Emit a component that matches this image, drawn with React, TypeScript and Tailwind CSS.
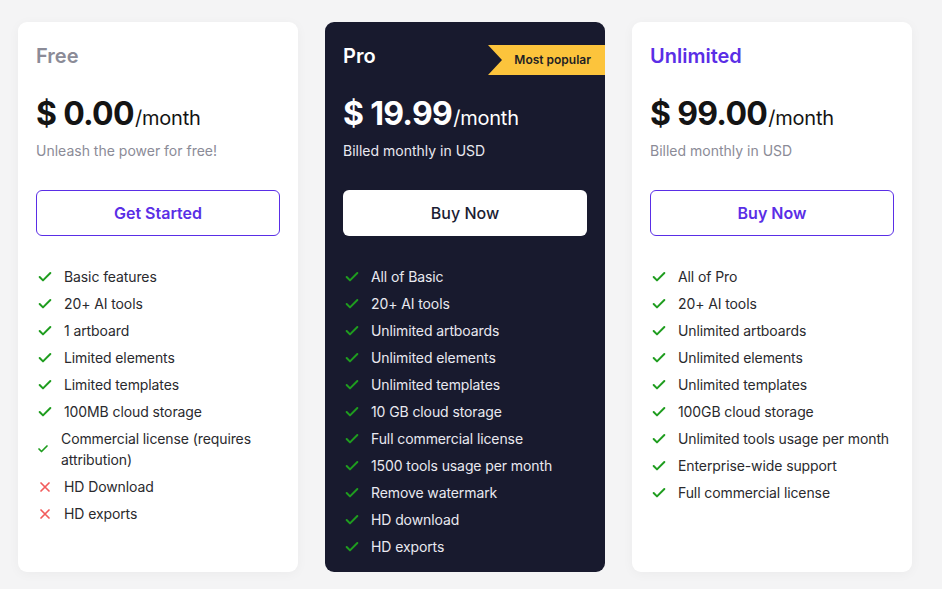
import React from "react";

type Feature = { text: string; ok: boolean };

const Check = () => (
  <svg width="16" height="16" viewBox="0 0 24 24" fill="none" stroke="#1f9d1f" strokeWidth="3" strokeLinecap="round" strokeLinejoin="round" className="shrink-0">
    <path d="M20 6 9 17l-5-5" />
  </svg>
);

const Cross = () => (
  <svg width="16" height="16" viewBox="0 0 24 24" fill="none" stroke="#f25c5c" strokeWidth="2.6" strokeLinecap="round" className="shrink-0">
    <path d="M18 6 6 18M6 6l12 12" />
  </svg>
);

const free: Feature[] = [
  { text: "Basic features", ok: true },
  { text: "20+ AI tools", ok: true },
  { text: "1 artboard", ok: true },
  { text: "Limited elements", ok: true },
  { text: "Limited templates", ok: true },
  { text: "100MB cloud storage", ok: true },
  { text: "Commercial license (requires attribution)", ok: true },
  { text: "HD Download", ok: false },
  { text: "HD exports", ok: false },
];

const pro: Feature[] = [
  "All of Basic",
  "20+ AI tools",
  "Unlimited artboards",
  "Unlimited elements",
  "Unlimited templates",
  "10 GB cloud storage",
  "Full commercial license",
  "1500 tools usage per month",
  "Remove watermark",
  "HD download",
  "HD exports",
].map((t) => ({ text: t, ok: true }));

const unlimited: Feature[] = [
  "All of Pro",
  "20+ AI tools",
  "Unlimited artboards",
  "Unlimited elements",
  "Unlimited templates",
  "100GB cloud storage",
  "Unlimited tools usage per month",
  "Enterprise-wide support",
  "Full commercial license",
].map((t) => ({ text: t, ok: true }));

function FeatureList({ items, dark }: { items: Feature[]; dark?: boolean }) {
  return (
    <ul className={`mt-[27px] flex flex-col text-[14px] tracking-[-0.1px] ${dark ? "text-[#e9e9f0]" : "text-[#2a2a2e]"}`}>
      {items.map((f) => {
        const long = f.text.length > 30 && f.text.includes("(");
        return (
          <li
            key={f.text}
            className={`flex items-center pl-[1px] ${long ? "gap-[12px] py-[3px] leading-[21px]" : "gap-[11px] h-[27px] leading-[27px]"}`}
          >
            {f.ok ? (
              long ? (
                <span className="w-[12px] shrink-0 flex">
                  <svg width="12" height="12" viewBox="0 0 24 24" fill="none" stroke="#1f9d1f" strokeWidth="3.4" strokeLinecap="round" strokeLinejoin="round">
                    <path d="M20 6 9 17l-5-5" />
                  </svg>
                </span>
              ) : (
                <Check />
              )
            ) : (
              <Cross />
            )}
            <span>{f.text}</span>
          </li>
        );
      })}
    </ul>
  );
}

function Price({ amount, dark }: { amount: string; dark?: boolean }) {
  return (
    <div className={`mt-[24px] flex items-baseline h-[40px] ${dark ? "text-white" : "text-[#141414]"}`}>
      <span className="text-[32px] leading-[40px] font-bold tracking-[-0.7px]">{amount}</span>
      <span className="text-[20px] ml-[1px] tracking-[-0.2px]">/month</span>
    </div>
  );
}

export default function App() {
  return (
    <div
      className="w-[942px] h-[589px] bg-[#f4f4f5] flex gap-[27px] pt-[22px] pl-[18px] overflow-hidden"
      style={{ fontFamily: "Inter, 'Noto Sans', sans-serif" }}
    >
      {/* Free */}
      <div className="w-[280px] h-[550px] rounded-[9px] bg-white shadow-[0_2px_12px_rgba(0,0,0,0.04)] px-[18px] pt-[20px]">
        <div className="text-[20px] leading-[28px] font-semibold text-[#8b8b97]">Free</div>
        <Price amount="$ 0.00" />
        <div className="mt-[7px] text-[14px] leading-[20px] text-[#8b8b97]">Unleash the power for free!</div>
        <button className="mt-[29px] w-[244px] h-[46px] rounded-[6px] border border-[#5a2ee6] text-[#5a2ee6] text-[16px] font-semibold">
          Get Started
        </button>
        <FeatureList items={free} />
      </div>

      {/* Pro */}
      <div className="relative w-[280px] h-[550px] rounded-[9px] bg-[#181a2e] px-[18px] pt-[20px]">
        <div
          className="absolute right-0 top-[23px] h-[30px] w-[117px] bg-[#fcc43c] flex items-center justify-end pr-[14px] text-[12px] font-semibold text-[#1f1f24]"
          style={{ clipPath: "polygon(0 0, 100% 0, 100% 100%, 0 100%, 14px 50%)" }}
        >
          Most popular
        </div>
        <div className="text-[20px] leading-[28px] font-semibold text-white">Pro</div>
        <Price amount="$ 19.99" dark />
        <div className="mt-[7px] text-[14px] leading-[20px] text-[#e9e9f0]">Billed monthly in USD</div>
        <button className="mt-[29px] w-[244px] h-[46px] rounded-[6px] bg-white text-[#1b1d33] text-[16px] font-medium">
          Buy Now
        </button>
        <FeatureList items={pro} dark />
      </div>

      {/* Unlimited */}
      <div className="w-[280px] h-[550px] rounded-[9px] bg-white shadow-[0_2px_12px_rgba(0,0,0,0.04)] px-[18px] pt-[20px]">
        <div className="text-[20px] leading-[28px] font-semibold text-[#5a2ee6]">Unlimited</div>
        <Price amount="$ 99.00" />
        <div className="mt-[7px] text-[14px] leading-[20px] text-[#8b8b97]">Billed monthly in USD</div>
        <button className="mt-[29px] w-[244px] h-[46px] rounded-[6px] border border-[#5a2ee6] text-[#5a2ee6] text-[16px] font-semibold">
          Buy Now
        </button>
        <FeatureList items={unlimited} />
      </div>
    </div>
  );
}
